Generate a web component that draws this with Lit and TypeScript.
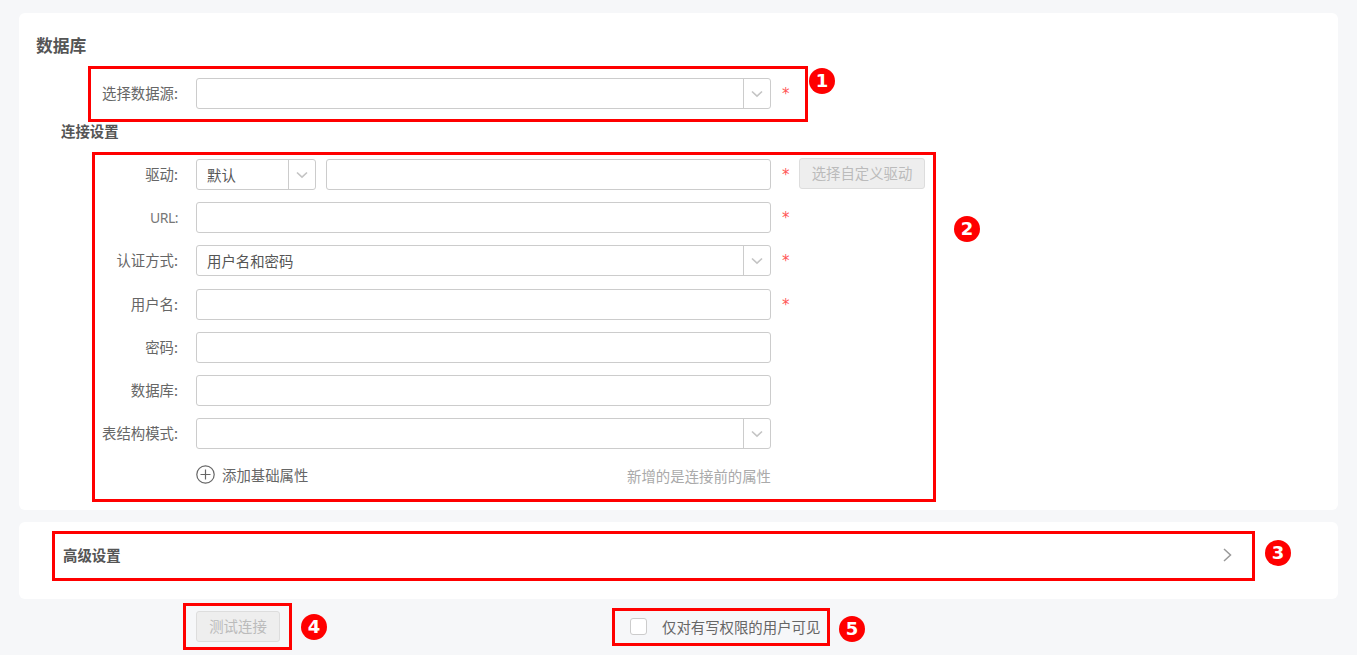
import { LitElement, html, css, svg } from "lit";
import { customElement } from "lit/decorators.js";

const chevronDown = svg`<svg class="chev" width="12" height="8" viewBox="0 0 12 8"><path d="M1 1.5 L6 6.2 L11 1.5" fill="none" stroke="#c4c4c4" stroke-width="1.6"/></svg>`;

@customElement("app-root")
export class AppRoot extends LitElement {
  static styles = css`
    :host {
      display: block;
      position: relative;
      width: 1357px;
      height: 655px;
      overflow: hidden;
      background: #f6f7f9;
      font-family: "Noto Sans CJK SC", "Noto Sans", sans-serif;
      font-size: 14.4px;
      color: #666;
      box-sizing: border-box;
      padding: 13px 19px 0;
    }
    .card {
      background: #fff;
      border-radius: 6px;
      box-sizing: border-box;
    }
    .main {
      height: 497px;
      padding: 20px 17px 0;
    }
    .title {
      font-size: 16.8px;
      font-weight: 700;
      line-height: 24px;
      color: #555;
    }
    .sub {
      margin: 12px 0 18px 25px;
      font-weight: 700;
      line-height: 20px;
      color: #555;
    }
    .first { margin-top: 21px; }
    .rows { display: flex; flex-direction: column; gap: 12.2px; }
    .row { display: flex; align-items: center; height: 31px; }
    .label {
      width: 142px;
      margin-right: 18px;
      padding-bottom: 2px;
      text-align: right;
      line-height: 29px;
      white-space: nowrap;
    }
    .latin {
      font-family: "Noto Sans", sans-serif;
      font-size: 14px;
      letter-spacing: -0.5px;
      color: #777;
    }
    .control { width: 575px; height: 31px; display: flex; gap: 10px; flex: none; }
    .field {
      flex: 1;
      height: 100%;
      box-sizing: border-box;
      border: 1px solid #ccc;
      border-radius: 3px;
      background: #fff;
      display: flex;
      align-items: stretch;
      min-width: 0;
    }
    .narrow { flex: none; width: 120px; }
    .value { flex: 1; padding-left: 10px; line-height: 29px; color: #555; }
    .arrow {
      width: 26px;
      border-left: 1px solid #ccc;
      display: flex;
      align-items: center;
      justify-content: center;
    }
    .star {
      color: #f55;
      margin-left: 11px;
      width: 17px;
      flex: none;
      font-family: "DejaVu Sans", sans-serif;
      font-size: 15px;
      line-height: 31px;
      position: relative;
      top: 1px;
    }
    .btn {
      box-sizing: border-box;
      height: 31px;
      padding-bottom: 2px;
      border: 1px solid #ddd;
      border-radius: 3px;
      background: #eee;
      color: #bbb;
      display: flex;
      align-items: center;
      justify-content: center;
    }
    .custom { width: 126px; margin-top: -2px; }
    .add {
      display: flex;
      align-items: center;
      justify-content: space-between;
      width: 575px;
      margin: 14px 0 0 160px;
      height: 22px;
    }
    .add-left { display: flex; align-items: center; gap: 7px; }
    .hint { color: #aaa; position: relative; top: 1px; }
    .advanced {
      margin-top: 12px;
      height: 77px;
      padding: 0 106px 12px 44px;
      display: flex;
      align-items: center;
      justify-content: space-between;
      font-weight: 700;
      color: #555;
    }
    .footer { display: flex; margin-top: 12px; }
    .test { width: 84px; margin-left: 177px; }
    .check { display: flex; align-items: center; gap: 15px; margin-left: 350px; height: 31px; }
    .box {
      width: 17px;
      height: 17px;
      box-sizing: border-box;
      border: 1px solid #ccc;
      border-radius: 3px;
      background: #fff;
    }
    .mark {
      position: absolute;
      box-sizing: border-box;
      border: 3px solid #f00;
      pointer-events: none;
    }
    .badge {
      position: absolute;
      width: 26px;
      height: 26px;
      border-radius: 50%;
      background: #f00;
      color: #fff;
      font-family: "DejaVu Sans", sans-serif;
      font-weight: 700;
      font-size: 18px;
      line-height: 26px;
      text-align: center;
    }
  `;

  private arrow() {
    return html`<span class="arrow">${chevronDown}</span>`;
  }

  private row(label: unknown, control: unknown, star = false, extra: unknown = null) {
    return html`<div class="row">
      <div class="label">${label}</div>
      <div class="control">${control}</div>
      ${star ? html`<span class="star">*</span>` : html``}
      ${extra}
    </div>`;
  }

  private input() {
    return html`<div class="field"></div>`;
  }

  private select(value = "") {
    return html`<div class="field"><span class="value">${value}</span>${this.arrow()}</div>`;
  }

  render() {
    const marks = [
      [88, 66, 720, 56],
      [92, 152, 844, 350],
      [52, 531, 1203, 50],
      [183, 603, 109, 47],
      [612, 608, 218, 38],
    ];
    const badges = [
      [822, 81],
      [967, 229],
      [1278, 553],
      [314, 627],
      [852, 629],
    ];
    return html`
      <section class="card main">
        <div class="title">数据库</div>
        <div class="rows first">${this.row("选择数据源:", this.select(), true)}</div>
        <div class="sub">连接设置</div>
        <div class="rows">
          ${this.row(
            "驱动:",
            html`<div class="field narrow"><span class="value">默认</span>${this.arrow()}</div>${this.input()}`,
            true,
            html`<div class="btn custom">选择自定义驱动</div>`
          )}
          ${this.row(html`<span class="latin">URL:</span>`, this.input(), true)}
          ${this.row("认证方式:", this.select("用户名和密码"), true)}
          ${this.row("用户名:", this.input(), true)}
          ${this.row("密码:", this.input())}
          ${this.row("数据库:", this.input())}
          ${this.row("表结构模式:", this.select())}
        </div>
        <div class="add">
          <div class="add-left">
            <svg width="19" height="19" viewBox="0 0 19 19">
              <circle cx="9.5" cy="9.5" r="8.7" fill="none" stroke="#666" stroke-width="1.2" />
              <path d="M9.5 4.5V14.5M4.5 9.5H14.5" stroke="#666" stroke-width="1.2" />
            </svg>
            <span>添加基础属性</span>
          </div>
          <span class="hint">新增的是连接前的属性</span>
        </div>
      </section>
      <section class="card advanced">
        <span>高级设置</span>
        <svg width="9" height="14" viewBox="0 0 9 14">
          <path d="M1 1 L7.5 7 L1 13" fill="none" stroke="#999" stroke-width="1.5" />
        </svg>
      </section>
      <div class="footer">
        <div class="btn test">测试连接</div>
        <div class="check"><span class="box"></span><span>仅对有写权限的用户可见</span></div>
      </div>
      ${marks.map(
        ([x, y, w, h]) =>
          html`<div class="mark" style="left:${x}px;top:${y}px;width:${w}px;height:${h}px"></div>`
      )}
      ${badges.map(
        ([x, y], i) =>
          html`<div class="badge" style="left:${x - 13}px;top:${y - 13}px">${i + 1}</div>`
      )}
    `;
  }
}
